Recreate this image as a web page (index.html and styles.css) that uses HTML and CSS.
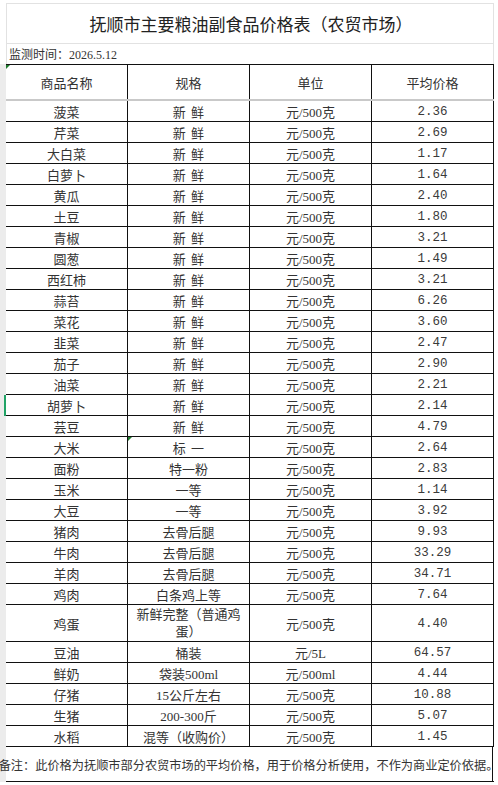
FILE: index.html
```html
<!DOCTYPE html>
<html lang="zh-CN">
<head>
<meta charset="utf-8">
<title>抚顺市主要粮油副食品价格表</title>
<link rel="stylesheet" href="styles.css">
</head>
<body>
<div class="sheet">
  <div class="title">抚顺市主要粮油副食品价格表（农贸市场）</div>
  <div class="date">监测时间：2026.5.12</div>
  <div class="grid">
    <div class="row head">
      <div class="c c1 mark">商品名称</div><div class="c">规格</div><div class="c">单位</div><div class="c">平均价格</div>
    </div>
    <div class="row"><div class="c c1">菠菜</div><div class="c">新 鲜</div><div class="c">元/500克</div><div class="c num">2.36</div></div>
    <div class="row"><div class="c c1">芹菜</div><div class="c">新 鲜</div><div class="c">元/500克</div><div class="c num">2.69</div></div>
    <div class="row"><div class="c c1">大白菜</div><div class="c">新 鲜</div><div class="c">元/500克</div><div class="c num">1.17</div></div>
    <div class="row"><div class="c c1">白萝卜</div><div class="c">新 鲜</div><div class="c">元/500克</div><div class="c num">1.64</div></div>
    <div class="row"><div class="c c1">黄瓜</div><div class="c">新 鲜</div><div class="c">元/500克</div><div class="c num">2.40</div></div>
    <div class="row"><div class="c c1">土豆</div><div class="c">新 鲜</div><div class="c">元/500克</div><div class="c num">1.80</div></div>
    <div class="row"><div class="c c1">青椒</div><div class="c">新 鲜</div><div class="c">元/500克</div><div class="c num">3.21</div></div>
    <div class="row"><div class="c c1">圆葱</div><div class="c">新 鲜</div><div class="c">元/500克</div><div class="c num">1.49</div></div>
    <div class="row"><div class="c c1">西红柿</div><div class="c">新 鲜</div><div class="c">元/500克</div><div class="c num">3.21</div></div>
    <div class="row"><div class="c c1">蒜苔</div><div class="c">新 鲜</div><div class="c">元/500克</div><div class="c num">6.26</div></div>
    <div class="row"><div class="c c1">菜花</div><div class="c">新 鲜</div><div class="c">元/500克</div><div class="c num">3.60</div></div>
    <div class="row"><div class="c c1">韭菜</div><div class="c">新 鲜</div><div class="c">元/500克</div><div class="c num">2.47</div></div>
    <div class="row"><div class="c c1">茄子</div><div class="c">新 鲜</div><div class="c">元/500克</div><div class="c num">2.90</div></div>
    <div class="row"><div class="c c1">油菜</div><div class="c">新 鲜</div><div class="c">元/500克</div><div class="c num">2.21</div></div>
    <div class="row active"><div class="c c1">胡萝卜</div><div class="c">新 鲜</div><div class="c">元/500克</div><div class="c num">2.14</div></div>
    <div class="row"><div class="c c1">芸豆</div><div class="c">新 鲜</div><div class="c">元/500克</div><div class="c num">4.79</div></div>
    <div class="row"><div class="c c1">大米</div><div class="c mark">标 一</div><div class="c">元/500克</div><div class="c num">2.64</div></div>
    <div class="row"><div class="c c1">面粉</div><div class="c">特一粉</div><div class="c">元/500克</div><div class="c num">2.83</div></div>
    <div class="row"><div class="c c1">玉米</div><div class="c">一等</div><div class="c">元/500克</div><div class="c num">1.14</div></div>
    <div class="row"><div class="c c1">大豆</div><div class="c">一等</div><div class="c">元/500克</div><div class="c num">3.92</div></div>
    <div class="row"><div class="c c1">猪肉</div><div class="c">去骨后腿</div><div class="c">元/500克</div><div class="c num">9.93</div></div>
    <div class="row"><div class="c c1">牛肉</div><div class="c">去骨后腿</div><div class="c">元/500克</div><div class="c num">33.29</div></div>
    <div class="row"><div class="c c1">羊肉</div><div class="c">去骨后腿</div><div class="c">元/500克</div><div class="c num">34.71</div></div>
    <div class="row"><div class="c c1">鸡肉</div><div class="c">白条鸡上等</div><div class="c">元/500克</div><div class="c num">7.64</div></div>
    <div class="row tall"><div class="c c1">鸡蛋</div><div class="c wrap">新鲜完整（普通鸡<br>蛋）</div><div class="c">元/500克</div><div class="c num">4.40</div></div>
    <div class="row"><div class="c c1">豆油</div><div class="c">桶装</div><div class="c">元/5L</div><div class="c num">64.57</div></div>
    <div class="row"><div class="c c1">鲜奶</div><div class="c">袋装500ml</div><div class="c">元/500ml</div><div class="c num">4.44</div></div>
    <div class="row"><div class="c c1">仔猪</div><div class="c">15公斤左右</div><div class="c">元/500克</div><div class="c num">10.88</div></div>
    <div class="row"><div class="c c1">生猪</div><div class="c">200-300斤</div><div class="c">元/500克</div><div class="c num">5.07</div></div>
    <div class="row"><div class="c c1">水稻</div><div class="c">混等（收购价）</div><div class="c">元/500克</div><div class="c num">1.45</div></div>
    <div class="row note"><div class="c full">备注：此价格为抚顺市部分农贸市场的平均价格，用于价格分析使用，不作为商业定价依据。</div></div>
  </div>
</div>
</body>
</html>
```

FILE: styles.css
```css
* { box-sizing: border-box; }

html, body {
  margin: 0;
  padding: 0;
  background: #ffffff;
}

body {
  font-family: "Liberation Serif", "Noto Sans CJK SC", serif;
  color: #333333;
  width: 498px;
  height: 785px;
  overflow: hidden;
}

.sheet {
  padding-top: 3px;
}

.title {
  margin-left: 6px;
  width: 488px;
  height: 41px;
  border: 1px solid #e2e2e2;
  display: flex;
  align-items: center;
  justify-content: center;
  font-family: "Noto Sans CJK SC", sans-serif;
  font-size: 17px;
  color: #222;
  padding-left: 2px;
}

.date {
  margin-left: 6px;
  width: 488px;
  height: 20px;
  border-right: 1px solid #e2e2e2;
  border-left: 1px solid #e2e2e2;
  display: flex;
  align-items: center;
  padding-left: 2px;
  font-size: 12px;
  color: #333;
}

.grid {
  border-left: 6px solid #ececec;
  width: 494px;
}

.row {
  position: relative;
  display: flex;
  height: 21px;
  border-bottom: 1px solid #111;
}

.row.head {
  height: 37px;
  border-top: 1px solid #111;
  border-bottom: 2px solid #c9c9c9;
}

.row.tall {
  height: 37px;
}

.row.note {
  height: 35px;
}

.row.active::before {
  content: "";
  position: absolute;
  left: -2px;
  top: 0;
  width: 2px;
  height: 21px;
  background: #21a366;
}

.c {
  position: relative;
  width: 122px;
  flex: 0 0 122px;
  border-right: 1px solid #111;
  display: flex;
  align-items: center;
  justify-content: center;
  font-size: 13px;
  white-space: pre;
  word-spacing: 2px;
}

.c.mark::before {
  content: "";
  position: absolute;
  left: 0;
  top: 0;
  width: 0;
  height: 0;
  border-top: 4px solid #1f7a2e;
  border-right: 4px solid transparent;
}

.c.num {
  font-family: "Liberation Mono", monospace;
  font-size: 12.5px;
  padding-top: 2px;
  color: #3a3a3a;
}

.c.wrap {
  white-space: normal;
  text-align: center;
  line-height: 17px;
}

.c.full {
  width: 488px;
  flex: 0 0 488px;
  margin-left: -1px;
  font-family: "Noto Sans CJK SC", sans-serif;
  font-size: 12.2px;
  word-spacing: 0;
  white-space: nowrap;
  padding-top: 1px;
}
```
